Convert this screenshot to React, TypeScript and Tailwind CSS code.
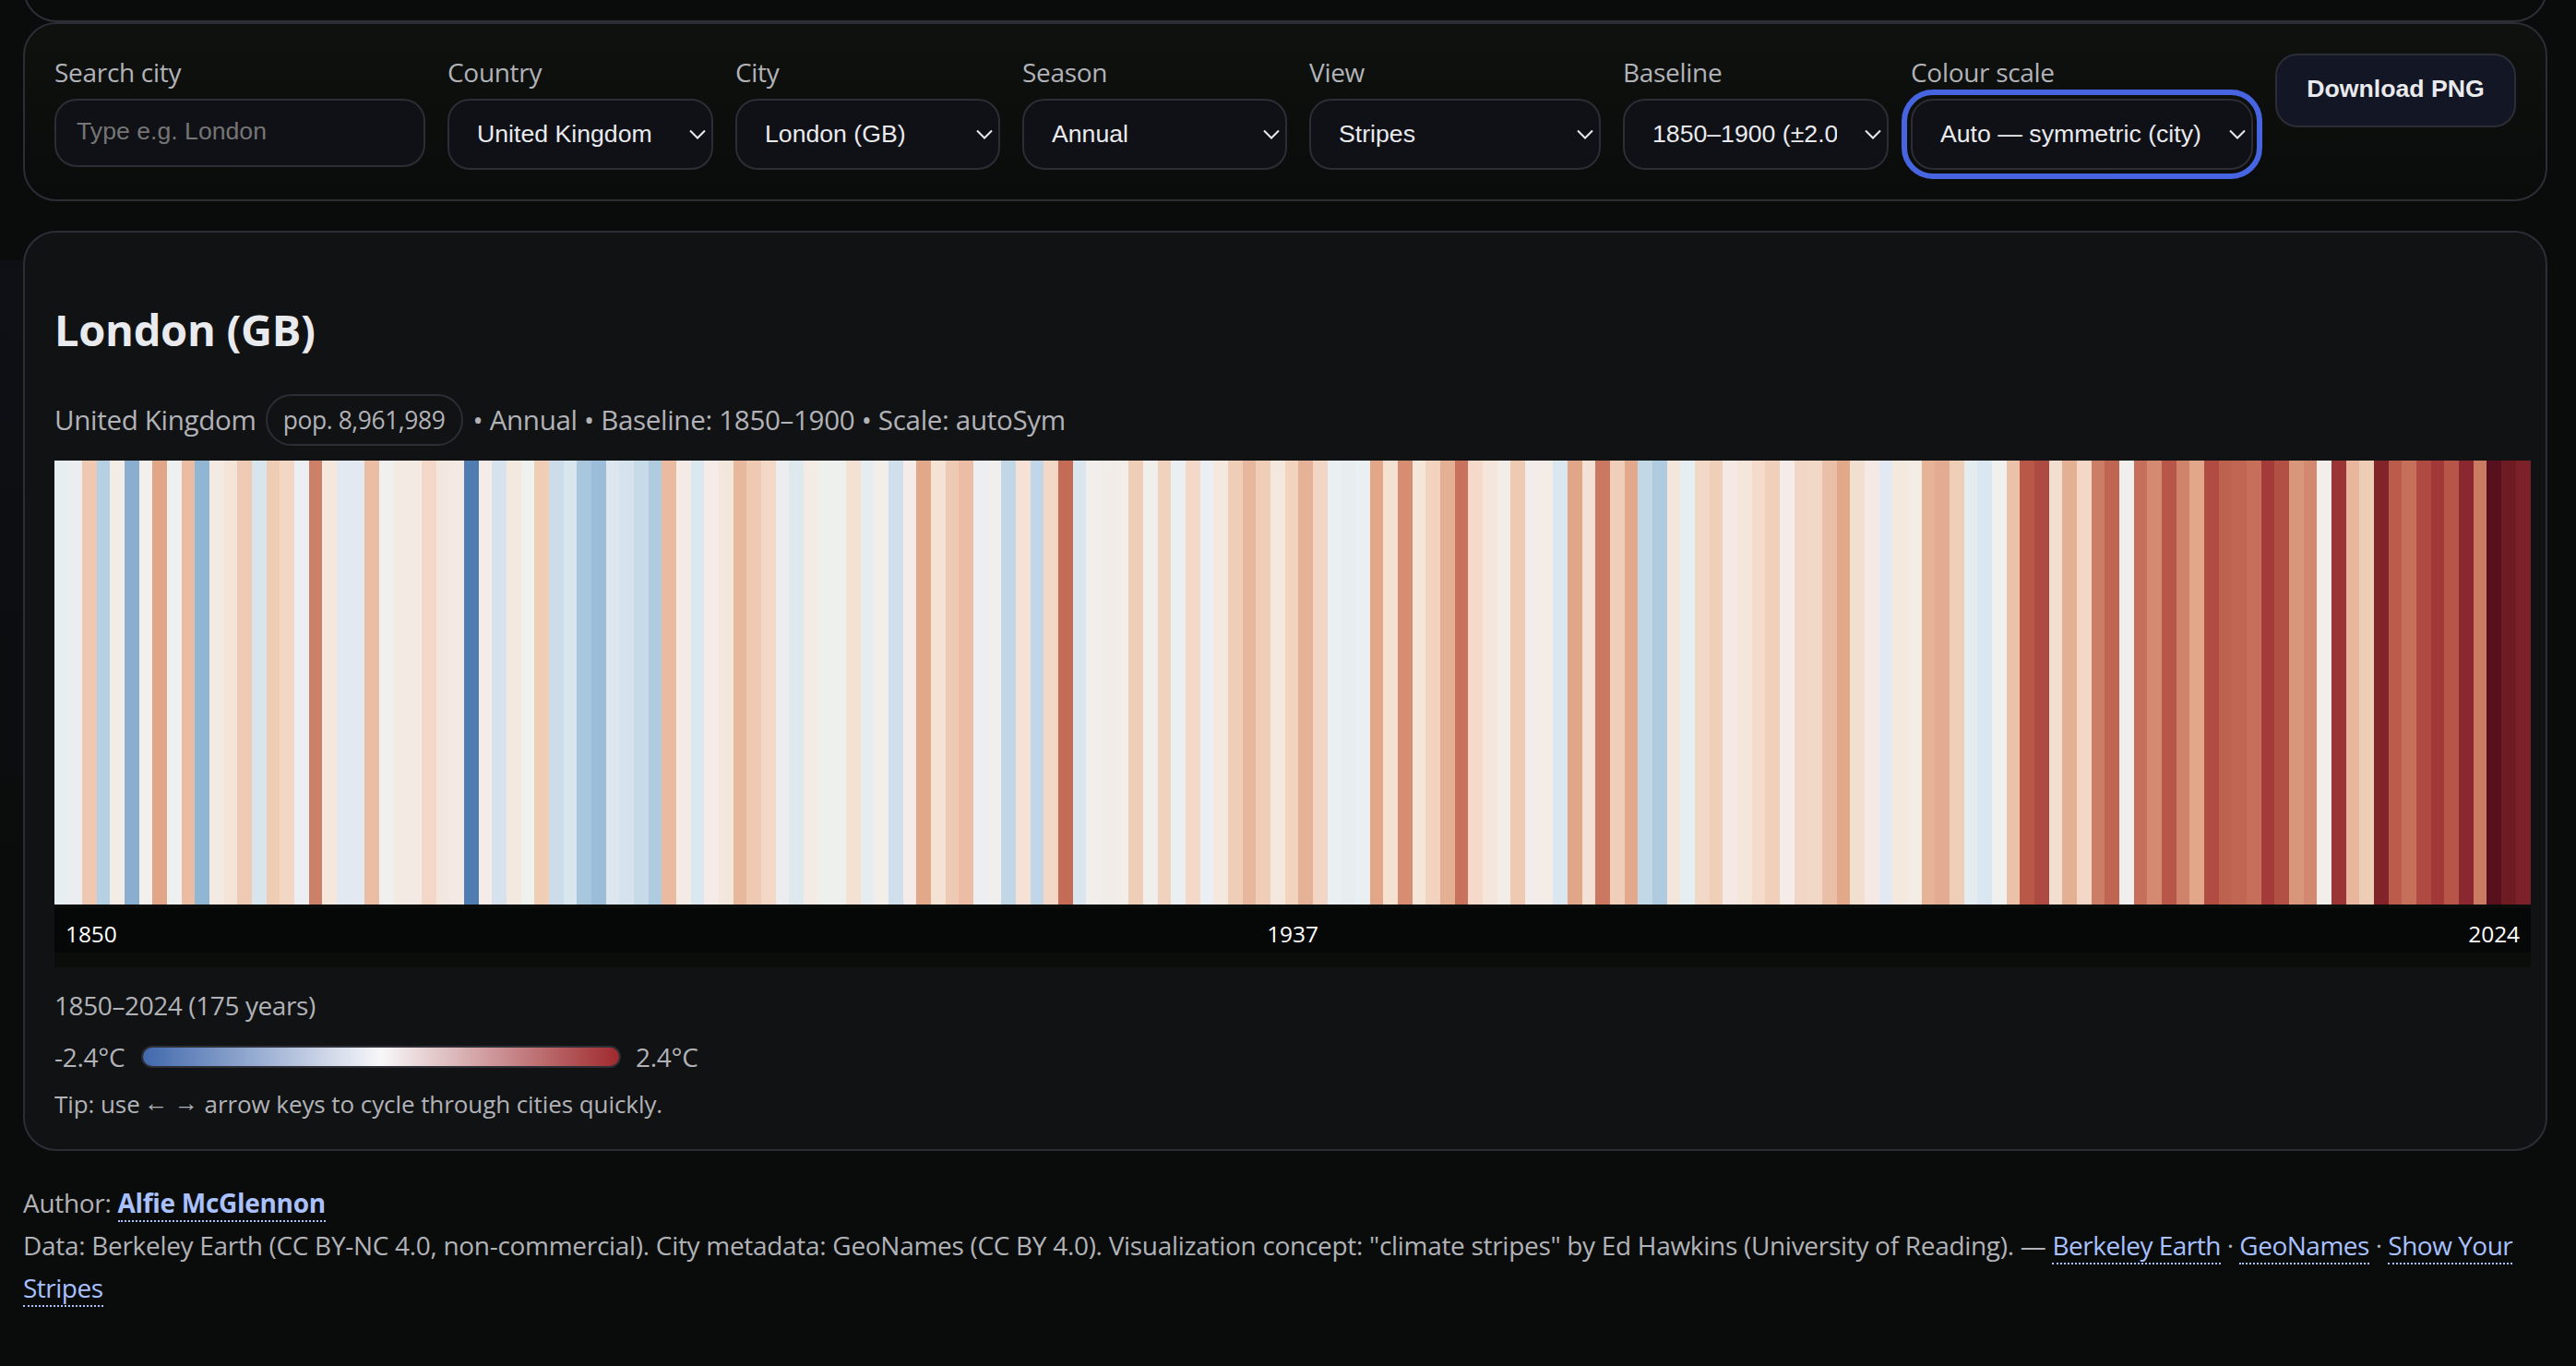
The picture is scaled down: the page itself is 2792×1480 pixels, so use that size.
import React from 'react';

const stripes = [
  '#e6eef1', '#ecedf0', '#eec8b0', '#b5d0e3', '#f3ebe5', '#8aaed0', '#f2efed', '#e1a587', '#eef0ef', '#eabda3',
  '#90b6d4', '#f3eae4', '#f4e3d7', '#eecab4', '#d7e5ed', '#efcdb5', '#f2d7c5', '#ebeff2', '#cd8068', '#f4e7db',
  '#e2e9f1', '#e2e9f1', '#eabda4', '#f0f0ef', '#f2eae3', '#f2eae3', '#f3d8c7', '#f3e8e0', '#f4e9e3', '#507db1',
  '#f5ecea', '#d7e2ee', '#f4e9df', '#eff1ef', '#f0ceb6', '#cddcea', '#d9e6ed', '#a8c6dc', '#9bbdd9', '#dde6ef',
  '#d7e3ec', '#c7dae7', '#afcbe0', '#ebbba1', '#f4ebe6', '#dae8ef', '#f5ebe8', '#f3e6db', '#e8b89c', '#eecab3',
  '#f3d8c7', '#ecedf0', '#dee9ee', '#f4ebe5', '#eef0ed', '#eef0ed', '#f3e1d3', '#e5edf0', '#f3eee9', '#cfdfec',
  '#f5ebe9', '#e1a98a', '#f4e2d5', '#eec9b3', '#ebbda5', '#edeef1', '#f1efeb', '#c1d7e6', '#f5e1d5', '#c1d6e7',
  '#f3d8c8', '#c46c56', '#d9e6ee', '#f2eeeb', '#f1ece8', '#f2ede9', '#efceb7', '#f1efeb', '#f1d2bf', '#eaeff2',
  '#f4d9c8', '#ebeef2', '#f4e8df', '#efceb7', '#e7b79d', '#efcdb6', '#f4e8de', '#f1d3be', '#e5b298', '#f1d5c5',
  '#eaeff2', '#e8eef0', '#eaeff2', '#e2a688', '#f4e1d2', '#d68d71', '#f4e6d9', '#f1d3c0', '#e4b094', '#c8715c',
  '#f5dacb', '#f5e6dc', '#f2ede9', '#eecab3', '#f2edea', '#f3ece7', '#dae7ef', '#e1a688', '#f4e1d5', '#ca7862',
  '#efcfba', '#e2a98c', '#c2d8e7', '#afcbe0', '#f4e6da', '#e5eef0', '#f2d8c6', '#f0cfb9', '#f4e9e4', '#f4e6da',
  '#f4dbca', '#f0d0ba', '#f5ecea', '#f1d5c5', '#f2d8c6', '#eabfa8', '#e1a98a', '#f1dfcf', '#f4e9e4', '#e2e9f2',
  '#f3e9dd', '#f3ece5', '#e7b397', '#e3ab92', '#efceb8', '#e4ecef', '#dae7f0', '#f0f0ee', '#ecc1a9', '#b95849',
  '#ad4b42', '#f2dfd1', '#e4b094', '#f3d8c8', '#cc7d65', '#c06551', '#f0efed', '#c66f5a', '#d48a70', '#b8564a',
  '#cf836b', '#e2a78a', '#b04c42', '#bc624f', '#c16652', '#c66f59', '#a43a39', '#b25045', '#d8967a', '#d3896f',
  '#f2eeeb', '#9b3535', '#e7b69c', '#eecdb6', '#812329', '#ba5b4c', '#c66f5a', '#ae4a42', '#a23838', '#b75548',
  '#8a272f', '#c97c62', '#58101f', '#6f1b22', '#7c212a'
];

const CHART_WIDTH = 1342;

// Snap every stripe to whole canvas pixels so there are no gaps
const stripeX = (i: number) => Math.floor((i * CHART_WIDTH) / stripes.length) * 2;

const filters = [
  { label: 'Country', value: 'United Kingdom', width: 'w-[288px]' },
  { label: 'City', value: 'London (GB)', width: 'w-[287px]' },
  { label: 'Season', value: 'Annual', width: 'w-[287px]' },
  { label: 'View', value: 'Stripes', width: 'w-[316px]' },
  { label: 'Baseline', value: '1850–1900 (±2.0°C)', width: 'w-[288px]' },
  { label: 'Colour scale', value: 'Auto — symmetric (city)', width: 'w-[371px]', focused: true }
];

const Label = ({ children }: { children: React.ReactNode }) => (
  <span className="h-[49px] leading-[40px] whitespace-nowrap">{children}</span>
);

const Select = ({ value, focused }: { value: string; focused?: boolean }) => (
  <div
    className={`flex h-[77px] items-center rounded-[24px] border-2 border-[#2c2d35] bg-[#101116] pl-[30px] pr-[6px] font-['Liberation_Sans',Arial,sans-serif] text-[26.67px] tracking-normal text-[#e9eaee] ${
      focused ? 'outline-[6px] outline-offset-4 outline-[#4865e1]' : ''
    }`}
  >
    <span className="min-w-0 flex-1 overflow-hidden pb-[2px] whitespace-nowrap">{value}</span>
    <svg className="ml-[30px] h-[12px] w-[18px] shrink-0" viewBox="0 0 18 12" fill="none" stroke="#e9eaee" strokeWidth="2">
      <path d="M1 1.5l8 8 8-8" />
    </svg>
  </div>
);

const Link = ({ children }: { children: React.ReactNode }) => (
  <a className="border-b-2 border-dotted border-[#a9c1ff] text-[#a9c1ff]">{children}</a>
);

const App = () => {
  return (
    <div className="h-[1480px] overflow-hidden bg-[#0a0c0b] bg-[radial-gradient(1700px_700px_at_300px_0px,#0f1017,#0a0c0b)] bg-[position:0_282px] bg-no-repeat pl-[25px] font-['Open_Sans','Noto_Sans',sans-serif] text-[28px] tracking-[-0.3px] text-[#b1b3b8]">
      <div className="w-[2736px]">
        <div className="flex h-6 items-end overflow-hidden">
          <div className="h-[200px] w-full shrink-0 rounded-[36px] border-2 border-[#2c2d35] bg-[#0a0c0b]" />
        </div>

        <div className="flex h-[194px] gap-6 rounded-[36px] border-2 border-[#2c2d35] bg-gradient-to-b from-[#0f110f] to-[#0a0c0b] p-8">
          <div className="flex w-[402px] flex-col">
            <Label>Search city</Label>
            <input
              placeholder="Type e.g. London"
              className="h-[74px] rounded-[24px] border-2 border-[#2c2d35] bg-[#101116] px-[22px] pb-[3px] font-['Liberation_Sans',Arial,sans-serif] text-[26.67px] tracking-normal placeholder:text-[#757575]"
            />
          </div>
          {filters.map((f) => (
            <div key={f.label} className={`flex flex-col ${f.width}`}>
              <Label>{f.label}</Label>
              <Select value={f.value} focused={f.focused} />
            </div>
          ))}
          <button className="h-[80px] w-[261px] shrink-0 rounded-[24px] border-2 border-[#2c2d35] bg-[#131624] pb-[4px] font-['Liberation_Sans',Arial,sans-serif] text-[26.67px] font-bold tracking-normal whitespace-nowrap text-[#e9eaee]">
            Download PNG
          </button>
        </div>

        <div className="mt-8 h-[997px] rounded-[36px] border-2 border-[#2c2d35] bg-[#111214] px-8">
          <h2 className="mt-[67px] h-[78px] text-[47px] leading-[76px] font-bold tracking-[-0.3px] text-[#e9eaee]">London (GB)</h2>
          <div className="mt-[30px] flex h-[56px] items-center text-[29.6px] tracking-[-0.34px] whitespace-nowrap">
            <span>United Kingdom</span>
            <span className="ml-[10px] flex h-[56px] w-[214px] items-center justify-center rounded-full border-2 border-[#2c2d35] pt-[2px] text-[26.4px] tracking-[-0.4px]">
              pop. 8,961,989
            </span>
            <span className="ml-[11px]">• Annual • Baseline: 1850–1900 • Scale: autoSym</span>
          </div>

          <div className="mt-4 w-[2684px] bg-[#0b0d0b]">
            <div className="flex h-[481px]">
              {stripes.map((color, i) => (
                <div key={i} className="shrink-0" style={{ width: stripeX(i + 1) - stripeX(i), backgroundColor: color }} />
              ))}
            </div>
            <div className="h-[68px] pt-1 pb-4">
              <div className="grid h-12 grid-cols-3 items-center bg-[#060807] px-3 pt-[9px] text-[24.5px] tracking-[-0.1px] text-white">
                <span>1850</span>
                <span className="text-center">1937</span>
                <span className="text-right">2024</span>
              </div>
            </div>
          </div>

          <div className="mt-[18px] h-[46px] leading-[46px] tracking-[-0.4px]">1850–2024 (175 years)</div>
          <div className="mt-[10px] flex h-[46px] items-center gap-4">
            <span className="w-[78px] whitespace-nowrap">-2.4°C</span>
            <div className="h-6 w-[520px] rounded-full border-2 border-[#2c2d35] bg-[linear-gradient(to_right,#4169ad,#f7f7f9,#9f2a2d)]" />
            <span>2.4°C</span>
          </div>
          <div className="mt-[7px] text-[26px] leading-[42px] tracking-[-0.08px]">
            Tip: use <span className="-ml-[2px] inline-block -translate-y-[2px]">← →</span> arrow keys to cycle through cities quickly.
          </div>
        </div>

        <footer className="mt-[33px] leading-[46px]">
          <div>
            Author: <strong><Link>Alfie McGlennon</Link></strong>
          </div>
          <div>
            Data: Berkeley Earth (CC BY-NC 4.0, non-commercial). City metadata: GeoNames (CC BY 4.0). Visualization concept:
            "climate stripes" by Ed Hawkins (University of Reading). —{' '}
            <span className="tracking-[-0.5px]">
              <Link>Berkeley Earth</Link> · <Link>GeoNames</Link> · <Link>Show Your Stripes</Link>
            </span>
          </div>
        </footer>
      </div>
    </div>
  );
};

export default App;
